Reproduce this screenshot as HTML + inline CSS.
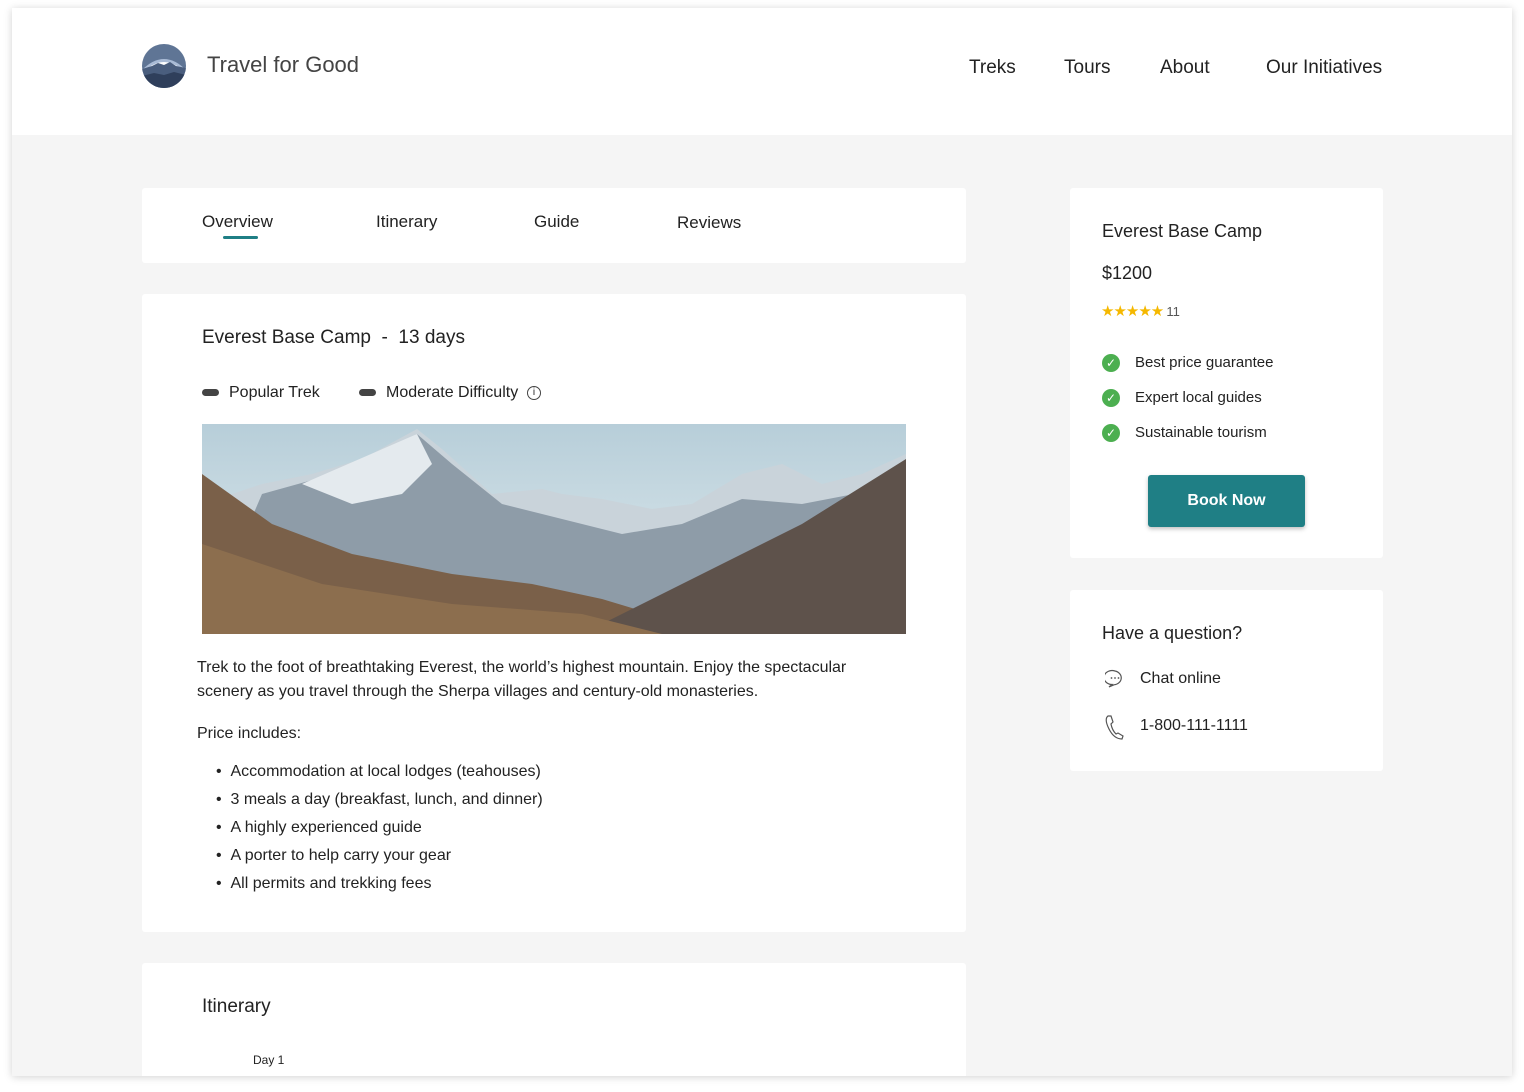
<!DOCTYPE html>
<html><head><meta charset="utf-8"><style>
*{margin:0;padding:0;box-sizing:border-box}
body{width:1524px;height:1092px;background:#fff;font-family:"Liberation Sans",sans-serif;color:#222;position:relative;overflow:hidden}
.page{position:absolute;left:12px;top:8px;width:1500px;height:1068px;background:#f5f5f5;box-shadow:0 1px 8px rgba(0,0,0,.18);overflow:hidden}
.hdr{position:absolute;left:0;top:0;width:1500px;height:127px;background:#fff}
.abs{position:absolute}
.card{position:absolute;background:#fff;border-radius:3px}
.t{position:absolute;white-space:nowrap}
ul{list-style:none}
</style></head><body>
<div class="page">
<div class="hdr">
 <svg class="abs" style="left:130px;top:36px" width="44" height="44" viewBox="0 0 44 44">
  <defs><clipPath id="c"><circle cx="22" cy="22" r="22"/></clipPath></defs>
  <g clip-path="url(#c)">
   <rect width="44" height="44" fill="#5f7595"/>
   <path d="M0 44V26 Q22 4 44 26V44Z" fill="#a9bbd6"/>
   <path d="M6 24 Q22 12 38 24Z" fill="#fff"/>
   <path d="M0 44V25 L10 22 16 19 22 21 28 18 34 22 44 24V44Z" fill="#4a5e7e"/>
   <path d="M0 44V32 L12 29 22 31 32 28 44 31V44Z" fill="#2f3f5b"/>
  </g>
 </svg>
 <div class="t" style="left:195px;top:44px;font-size:22px;color:#444">Travel for Good</div>
 <div class="t" style="left:957px;top:49px;font-size:19px">Treks</div>
 <div class="t" style="left:1052px;top:49px;font-size:19px">Tours</div>
 <div class="t" style="left:1148px;top:49px;font-size:19px">About</div>
 <div class="t" style="left:1254px;top:49px;font-size:19px">Our Initiatives</div>
</div>

<div class="card" style="left:130px;top:180px;width:824px;height:75px">
 <div class="t" style="left:60px;top:24px;font-size:17px">Overview</div>
 <div class="abs" style="left:81px;top:48px;width:35px;height:3px;background:#1f7f85;border-radius:2px"></div>
 <div class="t" style="left:234px;top:24px;font-size:17px">Itinerary</div>
 <div class="t" style="left:392px;top:24px;font-size:17px">Guide</div>
 <div class="t" style="left:535px;top:25px;font-size:17px">Reviews</div>
</div>

<div class="card" style="left:130px;top:286px;width:824px;height:638px">
 <div class="t" style="left:60px;top:33px;font-size:19px">Everest Base Camp &nbsp;- &nbsp;13 days</div>
 <div class="abs" style="left:60px;top:95px;width:17px;height:7px;background:#444;border-radius:4px"></div>
 <div class="t" style="left:87px;top:90px;font-size:16px">Popular Trek</div>
 <div class="abs" style="left:217px;top:95px;width:17px;height:7px;background:#444;border-radius:4px"></div>
 <div class="t" style="left:244px;top:90px;font-size:16px">Moderate Difficulty</div>
 <div class="abs" style="left:385px;top:92px;width:14px;height:14px;border:1px solid #444;border-radius:50%;font-size:10px;text-align:center;line-height:12px">i</div>
 <svg class="abs" style="left:60px;top:130px" width="704" height="210" viewBox="0 0 704 210">
  <defs><linearGradient id="sk" x1="0" y1="0" x2="0" y2="1"><stop offset="0" stop-color="#b7ced9"/><stop offset="1" stop-color="#e2ecef"/></linearGradient></defs>
  <rect width="704" height="210" fill="url(#sk)"/>
  <path d="M0 80 L60 60 110 50 160 35 215 5 240 25 290 70 340 65 360 70 400 75 450 85 490 80 540 50 580 40 620 60 660 50 704 30 V210 H0Z" fill="#c9d3da"/>
  <path d="M60 70 L150 45 215 10 250 40 300 80 360 95 420 110 480 100 540 75 600 80 704 60 V210 H0Z" fill="#8e9ca8"/>
  <path d="M100 60 L215 10 230 40 200 70 150 80Z" fill="#e4eaee"/>
  <path d="M0 50 L70 100 150 130 250 150 330 160 400 175 450 190 430 210 H0Z" fill="#7a6049"/>
  <path d="M400 200 L500 150 600 100 680 50 704 35 V210 H400Z" fill="#5e524b"/>
  <path d="M0 120 L120 160 250 180 380 190 460 210 H0Z" fill="#8c6e4e"/>
 </svg>
 <div class="t" style="left:55px;top:362px;font-size:16px;line-height:24px;white-space:normal;width:700px">Trek to the foot of breathtaking Everest, the world’s highest mountain. Enjoy the spectacular scenery as you travel through the Sherpa villages and century-old monasteries.</div>
 <div class="t" style="left:55px;top:431px;font-size:16px">Price includes:</div>
 <ul class="abs" style="left:74px;top:464px;font-size:16px;line-height:28px">
  <li>•&nbsp;&nbsp;Accommodation at local lodges (teahouses)</li>
  <li>•&nbsp;&nbsp;3 meals a day (breakfast, lunch, and dinner)</li>
  <li>•&nbsp;&nbsp;A highly experienced guide</li>
  <li>•&nbsp;&nbsp;A porter to help carry your gear</li>
  <li>•&nbsp;&nbsp;All permits and trekking fees</li>
 </ul>
</div>

<div class="card" style="left:130px;top:955px;width:824px;height:140px">
 <div class="t" style="left:60px;top:33px;font-size:19px">Itinerary</div>
 <div class="t" style="left:111px;top:90px;font-size:12px">Day 1</div>
</div>

<div class="card" style="left:1058px;top:180px;width:313px;height:370px">
 <div class="t" style="left:32px;top:33px;font-size:18px">Everest Base Camp</div>
 <div class="t" style="left:32px;top:75px;font-size:18px">$1200</div>
 <div class="t" style="left:31px;top:114px;font-size:15px;color:#f5b800;letter-spacing:-1px">★★★★★ <span style="color:#555;letter-spacing:0;font-size:13px">11</span></div>
 <div class="abs" style="left:32px;top:166px;width:18px;height:18px;border-radius:50%;background:#4caf50;color:#fff;font-size:12px;text-align:center;line-height:18px">✓</div>
 <div class="t" style="left:65px;top:166px;font-size:15px">Best price guarantee</div>
 <div class="abs" style="left:32px;top:201px;width:18px;height:18px;border-radius:50%;background:#4caf50;color:#fff;font-size:12px;text-align:center;line-height:18px">✓</div>
 <div class="t" style="left:65px;top:201px;font-size:15px">Expert local guides</div>
 <div class="abs" style="left:32px;top:236px;width:18px;height:18px;border-radius:50%;background:#4caf50;color:#fff;font-size:12px;text-align:center;line-height:18px">✓</div>
 <div class="t" style="left:65px;top:236px;font-size:15px">Sustainable tourism</div>
 <div class="abs" style="left:78px;top:287px;width:157px;height:52px;background:#1f7f85;border-radius:3px;box-shadow:0 2px 4px rgba(0,0,0,.25);color:#fff;font-size:16px;font-weight:bold;text-align:center;line-height:52px">Book Now</div>
</div>

<div class="card" style="left:1058px;top:582px;width:313px;height:181px">
 <div class="t" style="left:32px;top:33px;font-size:18px">Have a question?</div>
 <svg class="abs" style="left:35px;top:79px" width="20" height="20" viewBox="0 0 20 20"><path d="M10 2a8 7 0 1 0-3 13.5L4 18l5-2.2A8 7 0 0 0 10 2z" fill="none" stroke="#555" stroke-width="1.2"/><circle cx="6.5" cy="9" r=".9" fill="#555"/><circle cx="10" cy="9" r=".9" fill="#555"/><circle cx="13.5" cy="9" r=".9" fill="#555"/></svg>
 <div class="t" style="left:70px;top:80px;font-size:16px">Chat online</div>
 <svg class="abs" style="left:34px;top:124px" width="20" height="26" viewBox="0 0 20 26"><path d="M4 2l3 0 2 6-2 2q1 6 5 10l2-1 5 3-1 3q-8 0-13-10T4 2z" fill="none" stroke="#555" stroke-width="1.2"/></svg>
 <div class="t" style="left:70px;top:127px;font-size:16px">1-800-111-1111</div>
</div>
</div>
</body></html>
